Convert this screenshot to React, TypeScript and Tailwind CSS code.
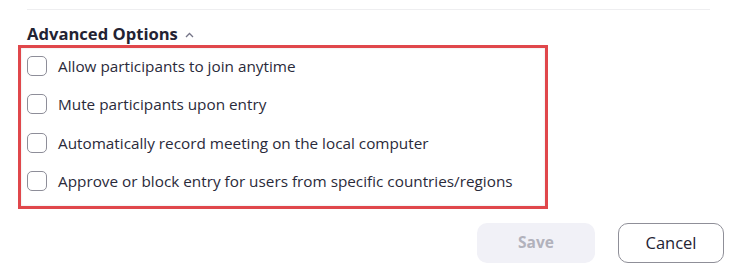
import React from "react";

const items = [
  "Allow participants to join anytime",
  "Mute participants upon entry",
  "Automatically record meeting on the local computer",
  "Approve or block entry for users from specific countries/regions",
];

export default function App() {
  return (
    <div
      className="w-[750px] h-[280px] bg-white overflow-hidden text-[#232333]"
      style={{ fontFamily: '"Open Sans", "Noto Sans", sans-serif' }}
    >
      <div className="pt-[9px] pl-[27px]">
        <div className="w-[683px] h-px bg-[#eeeef0]" />
      </div>
      <div className="pl-[27px] mt-[12px] h-[23px] flex items-center gap-[7px]">
        <span className="text-[16.6px] font-bold leading-[20px]">Advanced Options</span>
        <svg width="9" height="6" viewBox="0 0 9 6" className="mt-[3px]">
          <path d="M1 5 L4.5 1.5 L8 5" fill="none" stroke="#747487" strokeWidth="1.3" />
        </svg>
      </div>
      <div className="ml-[18px] w-[530px] h-[164px] border-[3px] border-[#e0474b] shadow-[inset_0_0_2px_rgba(0,0,0,0.15)]">
        {items.map((t) => (
          <div key={t} className="h-[38.3px] flex items-center pl-[6px] pb-[2px]">
            <div className="w-[20px] h-[20px] rounded-[5px] border border-[#8e8e99] bg-white shrink-0" />
            <span className="ml-[11px] text-[15.3px] leading-[18px] text-[#2a2a3a]">{t}</span>
          </div>
        ))}
      </div>
      <div className="flex justify-end pr-[26px] mt-[14px] gap-[23px]">
        <div className="w-[118px] h-[40px] rounded-[10px] bg-[#f1f1f7] flex items-center justify-center text-[15.5px] font-bold text-[#b2b2bc]">
          Save
        </div>
        <div className="w-[106px] h-[40px] rounded-[10px] border border-[#8f8f98] flex items-center justify-center text-[16.5px]">
          Cancel
        </div>
      </div>
    </div>
  );
}
